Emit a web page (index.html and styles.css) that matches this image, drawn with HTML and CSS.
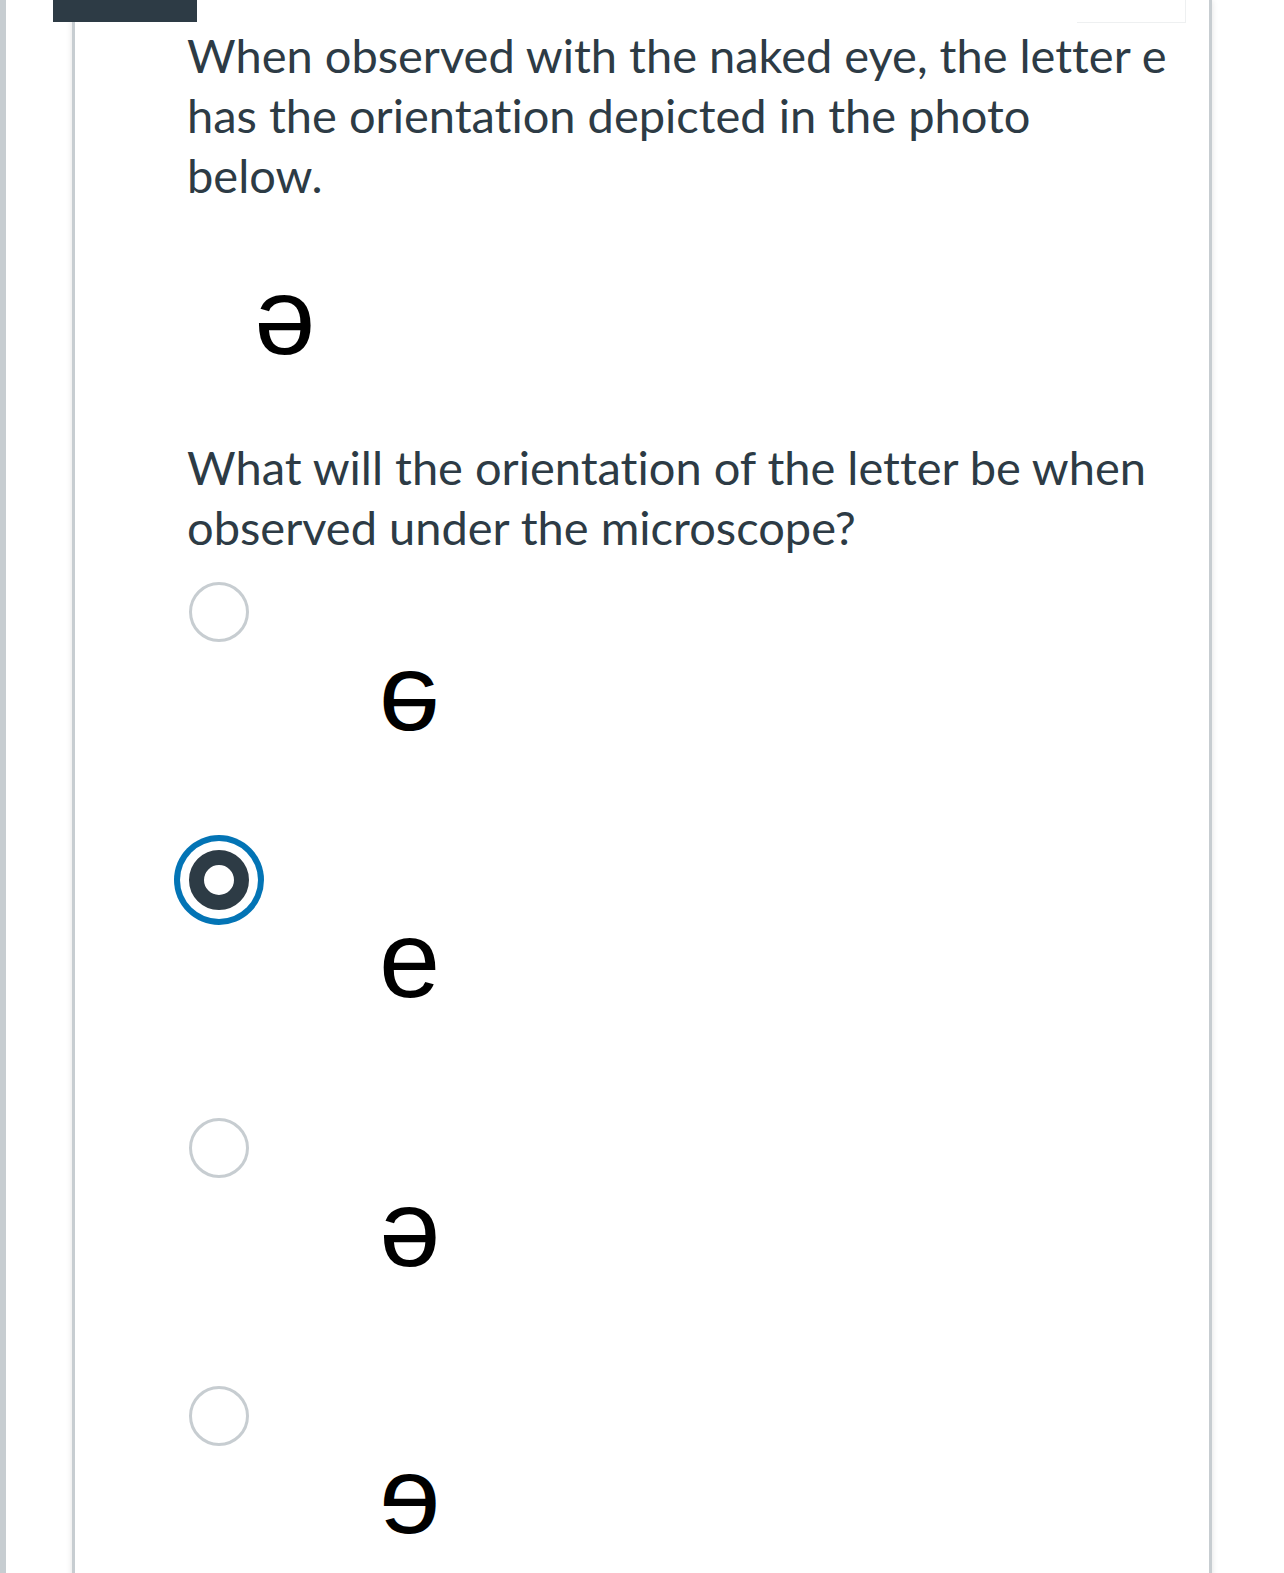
FILE: index.html
```html
<!DOCTYPE html>
<html lang="en">
<head>
    <meta charset="UTF-8">
    <meta name="viewport" content="width=device-width, initial-scale=1.0">
    <title>Quiz Question</title>
    <link rel="stylesheet" href="styles.css">
</head>
<body>

    <div class="page">
        <div class="rail"></div>

        <div class="question">
            <div class="question-tab"></div>
            <div class="question-flag"></div>

            <div class="question-text">
                <p>When observed with the naked eye, the letter e has the orientation depicted in the photo below.</p>
                <div class="specimen"><span class="glyph turn">e</span></div>
                <p>What will the orientation of the letter be when observed under the microscope?</p>
            </div>

            <div class="answers">
                <label class="answer">
                    <span class="radio"></span>
                    <span class="answer-img"><span class="glyph flip-v">e</span></span>
                </label>
                <label class="answer">
                    <span class="radio checked"></span>
                    <span class="answer-img"><span class="glyph">e</span></span>
                </label>
                <label class="answer">
                    <span class="radio"></span>
                    <span class="answer-img"><span class="glyph turn">e</span></span>
                </label>
                <label class="answer">
                    <span class="radio"></span>
                    <span class="answer-img"><span class="glyph flip-h">e</span></span>
                </label>
            </div>
        </div>
    </div>

</body>
</html>
```

FILE: styles.css
```css
body {
    font-family: Lato, "Liberation Sans", sans-serif;
    background-color: white;
    color: #2d3b45;
    margin: 0;
    padding: 0;
}
.page {
    display: flex;
    min-height: 100vh;
}
.rail {
    width: 6px;
    flex-shrink: 0;
    background-color: #c7cdd1;
}
.question {
    position: relative;
    box-sizing: border-box;
    width: 1140px;
    margin-left: 66px;
    padding: 25px 38px 40px 112px;
    border-left: 3px solid #c7cdd1;
    border-right: 3px solid #c7cdd1;
    box-shadow: 0 0 6px rgba(0, 0, 0, 0.12);
}
.question-tab {
    position: absolute;
    top: 0;
    left: -22px;
    width: 144px;
    height: 22px;
    background-color: #2d3b45;
}
.question-flag {
    position: absolute;
    top: -10px;
    right: 23px;
    width: 108px;
    height: 32px;
    border-right: 1px solid #eef0f1;
    border-bottom: 1px solid #eef0f1;
}
.question-text p {
    font-size: 47px;
    line-height: 60px;
    font-variant-ligatures: none;
    margin: 0;
}
.specimen {
    display: flex;
    padding-left: 67px;
    margin: 66px 0 78px;
}
.glyph {
    font-family: "Liberation Sans", Arial, sans-serif;
    font-size: 110px;
    line-height: 0.8;
    color: black;
    transform-origin: 50% 0.487em;
}
.turn {
    transform: rotate(180deg);
}
.flip-v {
    transform: scaleY(-1);
}
.flip-h {
    transform: scaleX(-1);
}
.answers {
    display: flex;
    flex-direction: column;
    gap: 115px;
    margin-top: 25px;
}
.answer {
    display: flex;
    flex-direction: column;
    gap: 5px;
}
.radio {
    box-sizing: border-box;
    width: 60px;
    height: 60px;
    margin-left: 2px;
    border: 3px solid #c7cdd1;
    border-radius: 50%;
    background-color: white;
}
.radio.checked {
    border: 15px solid #2d3b45;
    box-shadow: 0 0 0 9px white, 0 0 0 15px #0374b5;
}
.answer-img {
    display: flex;
    padding-left: 192px;
}
```
